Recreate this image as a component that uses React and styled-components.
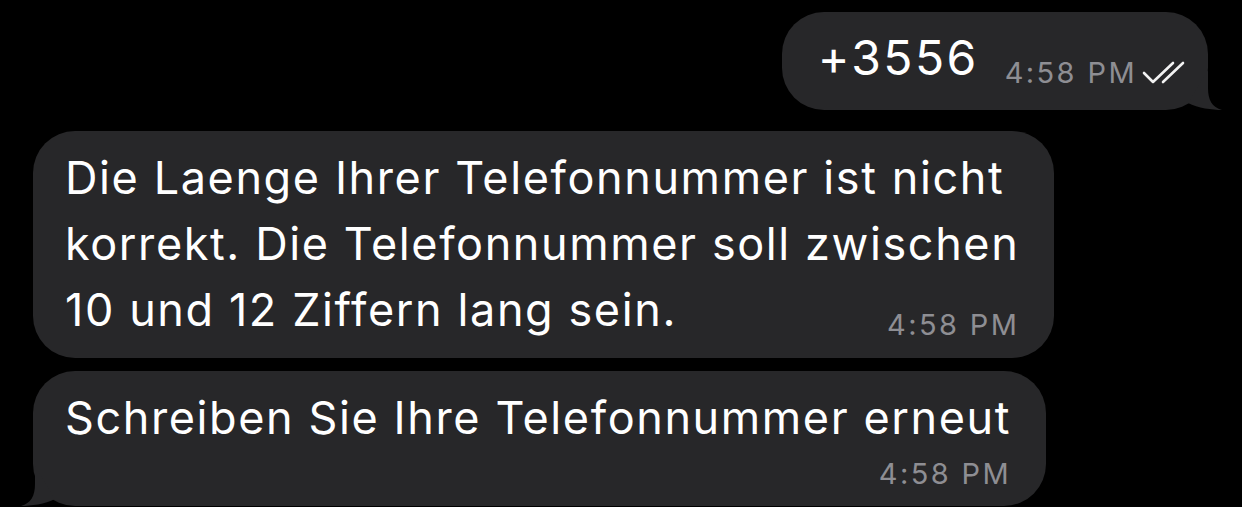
import React from 'react';
import styled, { createGlobalStyle } from 'styled-components';

const GlobalStyle = createGlobalStyle`
  html, body {
    margin: 0;
    padding: 0;
    background: #000;
    overflow: hidden;
  }
  body {
    font-family: Inter, "Noto Sans", sans-serif;
    -webkit-font-smoothing: antialiased;
  }
`;

const Chat = styled.div`
  width: 1242px;
  height: 507px;
  box-sizing: border-box;
  padding: 12px 34px 0 33px;
  display: flex;
  flex-direction: column;
`;

const Bubble = styled.div`
  position: relative;
  align-self: ${p => (p.$out ? 'flex-end' : 'flex-start')};
  margin-top: ${p => p.$gap || 0}px;
  background: #272729;
  border-radius: 42px;
  padding: ${p => (p.$out ? '13px 23px 19px 36px' : '14px 35px 15px 32px')};
  color: #fff;
`;

const Text = styled.div`
  font-size: ${p => p.$size || 45}px;
  line-height: 66px;
  letter-spacing: ${p => p.$track || 1.6}px;
  white-space: nowrap;
`;

const Meta = styled.span`
  display: ${p => (p.$below ? 'flex' : 'inline-flex')};
  float: ${p => (p.$below ? 'none' : 'right')};
  justify-content: flex-end;
  align-items: center;
  gap: 4px;
  margin: ${p => (p.$below ? '6px 0 0 0' : '31px 0 0 26px')};
  height: 34px;
  font-size: 29px;
  line-height: 34px;
  letter-spacing: 2.4px;
  color: #8e8e93;
`;

const Tail = styled.svg`
  position: absolute;
  bottom: 0;
  width: 40px;
  height: 40px;
  ${p => (p.$left ? 'left: -12px; transform: scaleX(-1);' : 'right: -14px;')}
`;

function TailShape({ left }) {
  return (
    <Tail $left={left} viewBox="0 0 40 40">
      <path d="M26 0 L26 18 C26 30 30 37 40 40 C30 40 16 38 6 33 Z" fill="#272729" />
    </Tail>
  );
}

function Checks() {
  return (
    <svg width="44" height="24" viewBox="0 0 44 24" fill="none" stroke="#f2f2f2" strokeWidth="2.6" strokeLinecap="round" strokeLinejoin="round">
      <path d="M3 12 L12 21 L32 2" />
      <path d="M22 21 L42 2" />
    </svg>
  );
}

const lines = [
  'Die Laenge Ihrer Telefonnummer ist nicht',
  'korrekt. Die Telefonnummer soll zwischen',
  '10 und 12 Ziffern lang sein.',
];

export default function App() {
  return (
    <>
      <GlobalStyle />
      <Chat>
        <Bubble $out>
          <Text $size={48} $track={2.4}>
            +3556
            <Meta>
              4:58 PM
              <Checks />
            </Meta>
          </Text>
          <TailShape />
        </Bubble>

        <Bubble $gap={21}>
          <Text>
            {lines[0]}
            <br />
            {lines[1]}
            <br />
            {lines[2]}
            <Meta>4:58 PM</Meta>
          </Text>
        </Bubble>

        <Bubble $gap={13}>
          <Text>Schreiben Sie Ihre Telefonnummer erneut</Text>
          <Meta $below>4:58 PM</Meta>
          <TailShape left />
        </Bubble>
      </Chat>
    </>
  );
}
